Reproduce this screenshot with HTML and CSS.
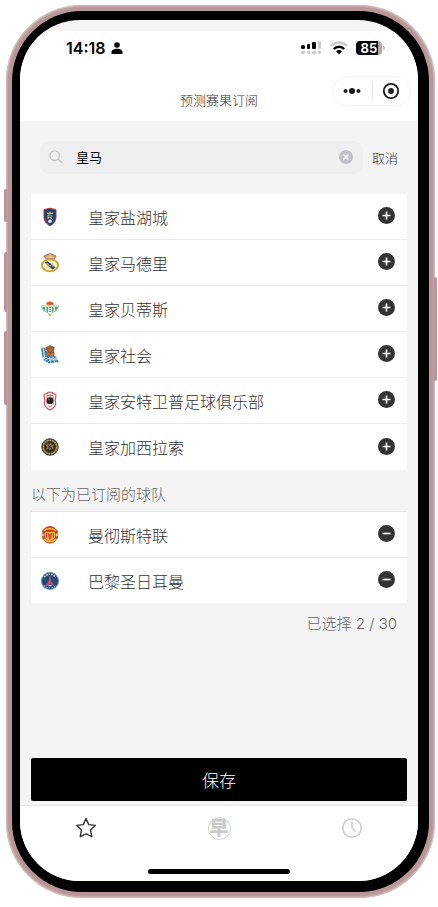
FILE: index.html
```html
<!DOCTYPE html>
<html lang="zh-CN">
<head>
    <meta charset="UTF-8">
    <meta name="viewport" content="width=device-width, initial-scale=1.0">
    <title>预测赛果订阅</title>
    <link rel="stylesheet" href="styles.css">
</head>
<body>
    <div class="phone">
        <span class="side-key key-action"></span>
        <span class="side-key key-up"></span>
        <span class="side-key key-down"></span>
        <span class="side-key key-power"></span>
        <div class="bezel">
            <div class="screen">
                <header class="header">
                    <div class="status-bar">
                        <div class="status-left">
                            <span class="time">14:18</span>
                            <svg width="12" height="12" viewBox="0 0 12 12"><circle cx="6" cy="3" r="2.8"/><path d="M0.5 12V10.5C0.5 8 3 6.8 6 6.8s5.5 1.2 5.5 3.7V12z"/></svg>
                        </div>
                        <div class="status-right">
                            <svg width="21" height="14" viewBox="0 0 21 14">
                                <rect x="0" y="4" width="4" height="4" rx="1.5"/>
                                <rect x="6" y="3" width="3" height="5" rx="1"/>
                                <rect x="11" y="1" width="4" height="7" rx="1"/>
                                <g fill="#c9c9c9"><rect x="17" y="0" width="3" height="8" rx="1"/><rect x="0" y="10" width="4" height="3" rx="1"/><rect x="6" y="10" width="3" height="3" rx="1"/><rect x="11" y="10" width="4" height="3" rx="1"/><rect x="17" y="10" width="3" height="3" rx="1"/></g>
                            </svg>
                            <svg width="18" height="14" viewBox="0 0 18 14" fill="none">
                                <path d="M1 5C5.5 0.4 12.5 0.4 17 5" stroke="#c9c9c9" stroke-width="2.4"/>
                                <path d="M3.8 8C6.8 5 11.2 5 14.2 8" stroke="#000" stroke-width="2.4"/>
                                <path d="M6 10.3C7.7 8.7 10.3 8.7 12 10.3L9 13.4z" fill="#000"/>
                            </svg>
                            <span class="battery">85</span>
                        </div>
                    </div>
                    <div class="nav-bar">
                        <h1 class="title">预测赛果订阅</h1>
                        <div class="capsule">
                            <button type="button" aria-label="更多">
                                <svg width="18" height="8" viewBox="0 0 18 8"><circle cx="2.5" cy="4" r="2"/><circle cx="9" cy="4" r="3"/><circle cx="15.5" cy="4" r="2"/></svg>
                            </button>
                            <button type="button" aria-label="关闭">
                                <svg width="18" height="18" viewBox="0 0 18 18"><circle cx="9" cy="9" r="7.2" fill="none" stroke="#1a1a1a" stroke-width="1.8"/><circle cx="9" cy="9" r="2.9"/></svg>
                            </button>
                        </div>
                    </div>
                </header>

                <main class="content">
                    <form class="search">
                        <div class="search-box">
                            <label for="keyword" aria-label="搜索球队">
                                <svg width="14" height="14" viewBox="0 0 14 14" fill="none" stroke="#c2c3c7" stroke-width="1.3"><circle cx="5.7" cy="5.7" r="4.8"/><path d="M9.2 9.2L13.2 13"/></svg>
                            </label>
                            <input type="text" id="keyword" value="皇马">
                            <button type="reset" aria-label="清空">
                                <svg width="14" height="14" viewBox="0 0 14 14"><circle cx="7" cy="7" r="7" fill="#bfc2ca"/><path d="M4.4 4.4l5.2 5.2M9.6 4.4L4.4 9.6" stroke="#f4f4f6" stroke-width="1.5"/></svg>
                            </button>
                        </div>
                        <button type="button" class="cancel">取消</button>
                    </form>

                    <ul class="team-list">
                        <li class="team">
                            <svg class="crest" viewBox="0 0 20 20">
                                <path d="M10 0v3" stroke="#e8b7a8" stroke-width="1"/>
                                <path d="M4 2.5L10 1.4 16 2.5V10C16 14.5 13 17.2 10 18.8 7 17.2 4 14.5 4 10z" fill="#203f71" stroke="#a63b45" stroke-width="1"/>
                                <path d="M6.5 5l2 1L10 4.6l1.5 1.4 2-1-.6 2H7.1z" fill="#c9b160"/>
                                <path d="M8 12V8h2.5c2 0 2 2.3 0 2.3H8M10 10.3l2.5 2.2" fill="none" stroke="#d8bd57" stroke-width="1"/>
                                <circle cx="10" cy="14.3" r="1.8" fill="#e1edf5"/>
                                <path d="M5.5 11c.4 3 1.5 4.5 2.6 5.5" fill="none" stroke="#b63a4b" stroke-width=".8"/>
                            </svg>
                            <span class="name">皇家盐湖城</span>
                            <button type="button" class="toggle" aria-label="订阅皇家盐湖城"><svg viewBox="0 0 17 17"><circle cx="8.5" cy="8.5" r="8.5"/><path d="M4.5 8.5h8M8.5 4.5v8"/></svg></button>
                        </li>
                        <li class="team">
                            <svg class="crest" viewBox="0 0 20 20">
                                <path d="M5.8 5.8L3.8 3 7 1.7 10 .5l3 1.2L16.2 3l-2 2.8z" fill="#d09a62" stroke="#a75e51" stroke-width=".8"/>
                                <path d="M6.2 4.1h7.6M10 1v4" stroke="#f1d79a" stroke-width="1"/>
                                <ellipse cx="10" cy="12.2" rx="8" ry="6" fill="#f8f4d8" stroke="#c9a928" stroke-width="2"/>
                                <path d="M4.5 9.5l3-1.3 8 6-3 2.3z" fill="#293e70"/>
                                <path d="M7 15V10l3 3.2L13 10v4" fill="none" stroke="#dcc262" stroke-width="1"/>
                            </svg>
                            <span class="name">皇家马德里</span>
                            <button type="button" class="toggle" aria-label="订阅皇家马德里"><svg viewBox="0 0 17 17"><circle cx="8.5" cy="8.5" r="8.5"/><path d="M4.5 8.5h8M8.5 4.5v8"/></svg></button>
                        </li>
                        <li class="team">
                            <svg class="crest" viewBox="0 0 20 20">
                                <path d="M7 6L6.3 3.7 8.2 3 10 2.6l1.8.4 1.9.7L13 6z" fill="#d65339" stroke="#e2a33e" stroke-width=".6"/>
                                <path d="M1 7h18l-3 4.8-3.7 1.8L10 17l-2.3-3.4L4 11.8z" fill="#fff" stroke="#6eb77e" stroke-width=".8"/>
                                <path d="M2 8h3.2v3.8L3.8 11zM18 8h-3.2v3.8l1.4-.8zM6.5 8h1.6v5.2l-1.6-.7zM13.5 8h-1.6v5.2l1.6-.7z" fill="#4aa764"/>
                                <path d="M8.8 8.5h2.5M8.8 10.3h2.2M8.8 12.3h2.5" stroke="#3c9b56" stroke-width="1"/>
                                <path d="M9 15h2l-1 2z" fill="#c8b451"/>
                            </svg>
                            <span class="name">皇家贝蒂斯</span>
                            <button type="button" class="toggle" aria-label="订阅皇家贝蒂斯"><svg viewBox="0 0 17 17"><circle cx="8.5" cy="8.5" r="8.5"/><path d="M4.5 8.5h8M8.5 4.5v8"/></svg></button>
                        </li>
                        <li class="team">
                            <svg class="crest" viewBox="0 0 20 20">
                                <path d="M6.5 5L6 2.3l2.5-.8L10 .5l1.6 1 2.6.8-.6 2.9z" fill="#a95832" stroke="#713c2c" stroke-width=".7"/>
                                <circle cx="10" cy="8.6" r="4.6" fill="#c36d31"/>
                                <path d="M5.7 7.3h8.5M7.5 5l5 7M12.5 5l-5 7" stroke="#7d4728" stroke-width=".8"/>
                                <path d="M1 3.4l4.3-1 1.8 9.4-4.6.7z" fill="#3684bd"/>
                                <path d="M3.3 3l1.2 9.2" stroke="#e9f6fb" stroke-width="1"/>
                                <path d="M3 15l5-3.4 5-.6 3 .5 2.8 5.5-3.8.2-6 1.4z" fill="#357fb9"/>
                                <path d="M4.5 15.7l4.5-2.5 5 .3 3-.5M7 17.5l4-2.6 6.5-.4M9.5 12l1 5.5M13 11.5l1.5 5.5" fill="none" stroke="#edf5fa" stroke-width=".8"/>
                                <path d="M2 1.5l16.5 17" stroke="#bd9257" stroke-width=".8"/>
                            </svg>
                            <span class="name">皇家社会</span>
                            <button type="button" class="toggle" aria-label="订阅皇家社会"><svg viewBox="0 0 17 17"><circle cx="8.5" cy="8.5" r="8.5"/><path d="M4.5 8.5h8M8.5 4.5v8"/></svg></button>
                        </li>
                        <li class="team">
                            <svg class="crest" viewBox="0 0 20 20">
                                <path d="M4.2 3.2l2.5-.5L8 1.3h4l1.3 1.4 2.5.5v3l-.7 3 .7 3.4C14.8 15.8 12.5 18 10 19c-2.5-1-4.8-3.2-5.8-6.4l.7-3.4-.7-3z" fill="#fff7f5" stroke="#cd4656" stroke-width="1.1"/>
                                <path d="M7 4.5h6M7 4.5v9M13 4.5v9M10 3v4" stroke="#d66b74" stroke-width="1"/>
                                <circle cx="10" cy="9.7" r="3.4" fill="#242426"/>
                                <circle cx="9" cy="8.6" r=".8" fill="#77777a"/>
                                <path d="M8 14.5l2 1.8 2-1.8" fill="none" stroke="#df8b8b" stroke-width="1"/>
                            </svg>
                            <span class="name">皇家安特卫普足球俱乐部</span>
                            <button type="button" class="toggle" aria-label="订阅皇家安特卫普足球俱乐部"><svg viewBox="0 0 17 17"><circle cx="8.5" cy="8.5" r="8.5"/><path d="M4.5 8.5h8M8.5 4.5v8"/></svg></button>
                        </li>
                        <li class="team">
                            <svg class="crest" viewBox="0 0 20 20">
                                <circle cx="10" cy="10" r="8.2" fill="#4c402b" stroke="#30291e" stroke-width="1"/>
                                <circle cx="10" cy="10" r="6.8" fill="none" stroke="#b49a62" stroke-width="1.6" stroke-dasharray="2 .6"/>
                                <circle cx="10" cy="10" r="5.3" fill="#312b22"/>
                                <path d="M6 8l2-2 1 2 2-2.5L12 8l2-1-1 3 1 2-3-.5-1 2-1.6-1.8L6 13l1-3z" fill="#8f7950"/>
                                <path d="M8 8.5l4 3M11.5 7.5l-3 4" stroke="#26221d" stroke-width="1"/>
                            </svg>
                            <span class="name">皇家加西拉索</span>
                            <button type="button" class="toggle" aria-label="订阅皇家加西拉索"><svg viewBox="0 0 17 17"><circle cx="8.5" cy="8.5" r="8.5"/><path d="M4.5 8.5h8M8.5 4.5v8"/></svg></button>
                        </li>
                    </ul>

                    <h2 class="subtitle">以下为已订阅的球队</h2>
                    <ul class="team-list subscribed">
                        <li class="team">
                            <svg class="crest" viewBox="0 0 20 20">
                                <path d="M6 2l4-1.2L14 2l4 4-.5 3 .5 4-4 4.5-4 1.3-4-1.3L2 13l.5-4L2 6z" fill="#cf4428"/>
                                <path d="M4 5.8C7 2.7 13 2.7 16 5.8M4 14c3 3.6 9 3.6 12 0" fill="none" stroke="#f0b63c" stroke-width="1.4"/>
                                <path d="M5 7h10v4.5c0 2-2 3.6-5 4.8-3-1.2-5-2.8-5-4.8z" fill="#f3bf45"/>
                                <path d="M8 7.5l2 1.5 2-1.5v3l-1 4H9l-1-4z" fill="#d4562a"/>
                                <path d="M6.6 8v4.5M13.4 8v4.5" stroke="#ca3923" stroke-width="1.2"/>
                                <circle cx="3.2" cy="10" r="1.4" fill="#f8e5b8" stroke="#b84634" stroke-width=".5"/>
                                <circle cx="16.8" cy="10" r="1.4" fill="#f8e5b8" stroke="#b84634" stroke-width=".5"/>
                            </svg>
                            <span class="name">曼彻斯特联</span>
                            <button type="button" class="toggle" aria-label="取消订阅曼彻斯特联"><svg viewBox="0 0 17 17"><circle cx="8.5" cy="8.5" r="8.5"/><path d="M4.5 8.5h8"/></svg></button>
                        </li>
                        <li class="team">
                            <svg class="crest" viewBox="0 0 20 20">
                                <circle cx="10" cy="10" r="8.5" fill="#1d4a79" stroke="#6e8da9" stroke-width="1"/>
                                <path d="M4.3 6.2C7.2 2.3 12.8 2.3 15.7 6.2" fill="none" stroke="#dce6ef" stroke-width="1.5" stroke-dasharray="1.6 1"/>
                                <path d="M10 5.2l1 5 3.4 5-3.4-1.9-1-1.3-1 1.3L5.6 15 9 10.2z" fill="#d64b69" stroke="#d64b69" stroke-width=".6"/>
                                <path d="M4 14.5c3 3.3 9 3.3 12 0" fill="none" stroke="#9bb1c7" stroke-width="1.2" stroke-dasharray="1.6 1"/>
                                <path d="M8.5 14.6h3" stroke="#eef2f5" stroke-width="1"/>
                            </svg>
                            <span class="name">巴黎圣日耳曼</span>
                            <button type="button" class="toggle" aria-label="取消订阅巴黎圣日耳曼"><svg viewBox="0 0 17 17"><circle cx="8.5" cy="8.5" r="8.5"/><path d="M4.5 8.5h8"/></svg></button>
                        </li>
                    </ul>
                    <p class="count">已选择 2 / 30</p>

                    <button type="button" class="save">保存</button>
                </main>

                <footer class="footer">
                    <nav class="tab-bar">
                        <a href="#subscribe" aria-label="订阅">
                            <svg width="22" height="22" viewBox="0 0 22 22" fill="none" stroke="#333" stroke-width="1.4" stroke-linejoin="round"><path d="M11 1.6l2.8 6 6.5.8-4.8 4.5 1.3 6.8L11 16.8l-5.8 2.9 1.3-6.8L1.7 8.4l6.5-.8z"/></svg>
                        </a>
                        <a href="#morning"><span class="morning">早</span></a>
                        <a href="#history" aria-label="历史">
                            <svg width="22" height="22" viewBox="0 0 22 22" fill="none" stroke="#cfcfcf" stroke-width="1.7"><circle cx="11" cy="11" r="9.2"/><path d="M11 5v6l3.4 4"/></svg>
                        </a>
                    </nav>
                    <div class="home-bar"></div>
                </footer>
            </div>
        </div>
    </div>
</body>
</html>
```
FILE: styles.css
```css
* {
    box-sizing: border-box;
}

body {
    margin: 0;
    padding: 5px 3px 9px 6px;
    min-height: 100vh;
    display: flex;
    background-color: #fff;
    color: #333;
    font-family: "Inter", "Noto Sans CJK SC", sans-serif;
    font-size: 16px;
    font-weight: 300;
}

button {
    padding: 0;
    border: none;
    background: none;
    color: inherit;
    font: inherit;
    cursor: pointer;
}

svg {
    display: block;
}

h1, h2, p, ul {
    margin: 0;
    padding: 0;
    font-weight: inherit;
}

/* Phone frame */
.phone {
    position: relative;
    flex: 1;
    display: flex;
    padding: 6px;
    border-radius: 76px;
    background-color: #b99698;
    box-shadow: inset 0 0 2px 1px #dccccd, 0 0 2px #ddd;
}

.bezel {
    flex: 1;
    display: flex;
    padding: 9px 11px 11px 8px;
    border-radius: 70px;
    background-color: #000;
}

.side-key {
    position: absolute;
    left: -2px;
    width: 3px;
    border-radius: 2px 0 0 2px;
    background-color: #b59599;
}

.key-action {
    top: 184px;
    height: 33px;
}

.key-up {
    top: 247px;
    height: 60px;
}

.key-down {
    top: 326px;
    height: 74px;
}

.key-power {
    top: 272px;
    right: -2px;
    left: auto;
    height: 104px;
    border-radius: 0 2px 2px 0;
}

.screen {
    flex: 1;
    display: flex;
    flex-direction: column;
    overflow: hidden;
    padding-top: 11px;
    border-radius: 60px;
    background-color: #f4f4f4;
}

/* Header */
.header {
    background-color: #fff;
}

.status-bar {
    display: flex;
    justify-content: space-between;
    align-items: center;
    height: 34px;
    padding: 0 36px 0 46px;
}

.status-left,
.status-right {
    display: flex;
    align-items: center;
}

.status-left {
    gap: 5px;
}

.status-right {
    gap: 8px;
}

.time {
    color: #000;
    font-size: 16px;
    font-weight: 600;
}

.battery {
    position: relative;
    width: 26px;
    height: 14px;
    border-radius: 4px;
    background: linear-gradient(to right, #000 84%, #aaa 84%);
    color: #fff;
    font-size: 13px;
    font-weight: 700;
    line-height: 14px;
    text-align: center;
}

.battery::after {
    content: "";
    position: absolute;
    top: 5px;
    right: -3px;
    width: 2px;
    height: 4px;
    border-radius: 0 2px 2px 0;
    background-color: #bbb;
}

.nav-bar {
    display: grid;
    grid-template-columns: 1fr auto 1fr;
    align-items: start;
    height: 56px;
    padding: 11px 7px 0;
}

.title {
    grid-column: 2;
    margin-top: 14px;
    font-size: 13px;
    line-height: 20px;
}

.capsule {
    display: flex;
    justify-self: end;
    width: 79px;
    height: 30px;
    border: 1px solid #f3f3f3;
    border-radius: 15px;
    fill: #1a1a1a;
}

.capsule button {
    flex: 1;
    display: flex;
    justify-content: center;
    align-items: center;
}

.capsule button + button {
    background: linear-gradient(#e8e8e8, #e8e8e8) left center / 1px 18px no-repeat;
}

/* Search */
.content {
    flex: 1;
    display: flex;
    flex-direction: column;
    padding: 20px 11px 4px;
}

.search {
    display: flex;
    align-items: center;
    gap: 9px;
    padding: 0 9px;
    margin-bottom: 20px;
    font-size: 13px;
}

.search-box {
    flex: 1;
    display: flex;
    align-items: center;
    height: 33px;
    padding: 0 10px 2px 9px;
    border-radius: 9px;
    background-color: #efefef;
}

.search-box input {
    flex: 1;
    min-width: 0;
    margin: 0 8px 0 13px;
    padding: 0;
    border: none;
    outline: none;
    background: none;
    color: #000;
    font: inherit;
    font-weight: 400;
}

/* Teams */
.team-list {
    list-style: none;
    background-color: #fff;
}

.team {
    display: flex;
    align-items: center;
    height: 46px;
    padding: 0 12px 0 9px;
    border-bottom: 1px solid #ececec;
}

.team:last-child {
    border-bottom: none;
}

.subscribed {
    border-top: 1px solid #e4e4e4;
}

.subscribed .team:last-child {
    height: 45px;
}

.crest {
    width: 20px;
    height: 20px;
    margin-right: 28px;
}

.name {
    flex: 1;
}

.toggle svg {
    width: 17px;
    height: 17px;
    margin-bottom: 2px;
    fill: #333;
    stroke: #fff;
    stroke-width: 1.7;
}

.toggle circle {
    stroke: none;
}

.subtitle {
    padding: 14px 0 5px;
    color: #666;
    font-size: 15px;
    line-height: 22px;
}

.count {
    padding: 10px 10px 0;
    color: #666;
    font-size: 15px;
    line-height: 22px;
    text-align: right;
}

.save {
    height: 43px;
    margin-top: auto;
    border-radius: 2px;
    background-color: #000;
    color: #fff;
    font-size: 17px;
}

/* Footer */
.footer {
    padding-bottom: 7px;
    border-top: 1px solid #e6e6e6;
    background-color: #fff;
}

.tab-bar {
    display: flex;
    height: 63px;
    padding-top: 11px;
}

.tab-bar a {
    flex: 1;
    display: flex;
    justify-content: center;
    align-items: flex-start;
    text-decoration: none;
}

.morning {
    width: 23px;
    height: 23px;
    border: 1px solid #cfcfcf;
    border-radius: 50%;
    color: #c9c9c9;
    font-size: 19px;
    font-weight: 900;
    line-height: 22px;
    text-align: center;
}

.home-bar {
    width: 142px;
    height: 5px;
    margin: 0 auto;
    border-radius: 3px;
    background-color: #000;
}
```
